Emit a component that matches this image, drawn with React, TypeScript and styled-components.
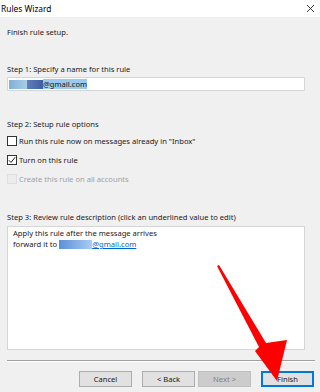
import styled, { createGlobalStyle } from 'styled-components';

const Global = createGlobalStyle`
  html, body { margin: 0; padding: 0; background: #f0f0f0; }
  * { box-sizing: border-box; }
`;

const Window = styled.div`
  position: relative;
  width: 320px;
  height: 392px;
  overflow: hidden;
  background: #f0f0f0;
  font-family: "Noto Sans", "Open Sans", sans-serif;
  font-size: 7.6px;
  color: #1a1a1a;
  display: flex;
  flex-direction: column;
`;

const TitleBar = styled.div`
  height: 17px;
  background: #ffffff;
  display: flex;
  align-items: center;
  justify-content: space-between;
  padding: 0 5px 0 1px;
  font-size: 8.4px;
  color: #000;
`;

const Body = styled.div`
  display: flex;
  flex-direction: column;
  padding: 0 15px 0 7px;
`;

const Label = styled.div<{ $top: number }>`
  line-height: 12px;
  height: 12px;
  margin-top: ${({ $top }) => $top}px;
  white-space: nowrap;
`;

const NameInput = styled.div`
  margin-top: 2px;
  height: 14px;
  background: #fff;
  border: 1px solid #d6d6d6;
  display: flex;
  align-items: center;
  padding-left: 1px;
  line-height: 10px;
`;

const Blur = styled.span<{ $w: number; $from: string; $to: string }>`
  display: inline-block;
  vertical-align: middle;
  width: ${({ $w }) => $w}px;
  height: 9px;
  background: linear-gradient(90deg, ${({ $from }) => $from}, ${({ $to }) => $to});
  filter: blur(0.6px);
`;

const Selected = styled.span`
  background: #99c9ef;
  height: 10px;
  line-height: 10px;
  color: #1a1a1a;
`;

const CheckRow = styled.div<{ $top: number; $disabled?: boolean }>`
  display: flex;
  align-items: center;
  gap: 2px;
  height: 12px;
  margin-top: ${({ $top }) => $top}px;
  color: ${({ $disabled }) => ($disabled ? '#a0a0a0' : '#1a1a1a')};
  white-space: nowrap;
`;

const Box = styled.span<{ $disabled?: boolean }>`
  width: 10px;
  height: 10px;
  flex: none;
  border: 1px solid ${({ $disabled }) => ($disabled ? '#dedede' : '#333')};
  background: ${({ $disabled }) => ($disabled ? '#ececec' : '#fff')};
  display: flex;
  align-items: center;
  justify-content: center;
`;

const Description = styled.div`
  margin-top: 3px;
  height: 124px;
  background: #fff;
  border: 1px solid #d6d6d6;
  padding: 1px 5px;
  line-height: 11px;
`;

const LinkText = styled.span`
  color: #0066cc;
  text-decoration: underline;
`;

const Separator = styled.div`
  margin: 10px 5px 0 7px;
  height: 2px;
  border-top: 1px solid #a0a0a0;
  border-bottom: 1px solid #ffffff;
`;

const Buttons = styled.div`
  display: flex;
  justify-content: flex-end;
  padding: 0 6px 0 0;
  margin-top: 9px;
`;

const Button = styled.div<{ $gap: number; $disabled?: boolean; $default?: boolean }>`
  width: 53px;
  height: 16px;
  margin-left: ${({ $gap }) => $gap}px;
  display: flex;
  align-items: center;
  justify-content: center;
  background: ${({ $disabled }) => ($disabled ? '#cccccc' : '#e1e1e1')};
  border: ${({ $default, $disabled }) =>
    $default ? '2px solid #0078d7' : `1px solid ${$disabled ? '#bfbfbf' : '#adadad'}`};
  color: ${({ $disabled }) => ($disabled ? '#838383' : '#1a1a1a')};
`;

const Arrow = styled.svg`
  position: absolute;
  left: 0;
  top: 0;
  pointer-events: none;
`;

export default function App() {
  return (
    <Window>
      <Global />
      <TitleBar>
        <span>Rules Wizard</span>
        <svg width="9" height="9" viewBox="0 0 9 9">
          <path d="M1 1L8 8M8 1L1 8" stroke="#222" strokeWidth="0.9" />
        </svg>
      </TitleBar>
      <Body>
        <Label $top={9}>Finish rule setup.</Label>
        <Label $top={25}>Step 1: Specify a name for this rule</Label>
        <NameInput>
          <Blur $w={18} $from="#7fb0d6" $to="#a9cde6" />
          <Blur $w={16} $from="#5f7fb8" $to="#3d5ea0" />
          <Selected>@gmail.com</Selected>
        </NameInput>
        <Label $top={27}>Step 2: Setup rule options</Label>
        <CheckRow $top={5}>
          <Box />
          Run this rule now on messages already in "Inbox"
        </CheckRow>
        <CheckRow $top={7}>
          <Box>
            <svg width="8" height="8" viewBox="0 0 8 8">
              <path d="M0.8 4.2L3 6.4L7.2 1.2" fill="none" stroke="#222" strokeWidth="1" />
            </svg>
          </Box>
          Turn on this rule
        </CheckRow>
        <CheckRow $top={7} $disabled>
          <Box $disabled />
          Create this rule on all accounts
        </CheckRow>
        <Label $top={26}>Step 3: Review rule description (click an underlined value to edit)</Label>
        <Description>
          <div>Apply this rule after the message arrives</div>
          <div>
            forward it to <Blur $w={33} $from="#5b8fd9" $to="#a9cdf3" />
            <LinkText>@gmail.com</LinkText>
          </div>
        </Description>
      </Body>
      <Separator />
      <Buttons>
        <Button $gap={0}>Cancel</Button>
        <Button $gap={10}>&lt; Back</Button>
        <Button $gap={3} $disabled>Next &gt;</Button>
        <Button $gap={10} $default>Finish</Button>
      </Buttons>
      <Arrow width="320" height="392" viewBox="0 0 320 392">
        <polygon
          points="217,266 219,265 266,343 287,340 277,381 255,351 259,347"
          fill="#ff0000"
        />
      </Arrow>
    </Window>
  );
}
